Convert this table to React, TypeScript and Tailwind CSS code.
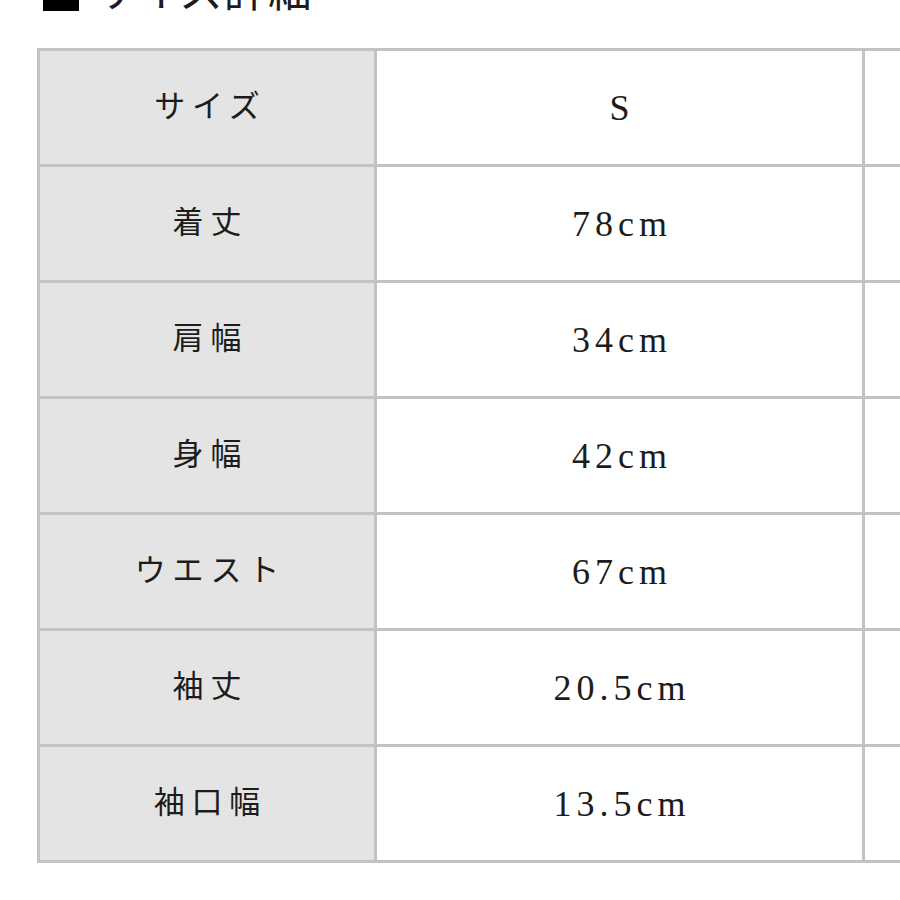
const rows: [string, string][] = [
	["サイズ", "S"],
	["着丈", "78cm"],
	["肩幅", "34cm"],
	["身幅", "42cm"],
	["ウエスト", "67cm"],
	["袖丈", "20.5cm"],
	["袖口幅", "13.5cm"],
];

const font = {
	fontFamily: '"Liberation Serif", "Noto Sans CJK JP", serif',
};

export default function App() {
	return (
		<div
			className="w-[900px] h-[900px] overflow-hidden bg-white text-[#1c1c1c]"
			style={font}
		>
			<div className="flex items-end gap-[14px] pl-[43px] -mt-[30px] h-[45px]">
				<span className="block w-[36px] h-[36px] bg-black mb-[4px]" />
				<span className="text-[44px] leading-none">サイズ詳細</span>
			</div>

			<div className="mt-[33px] ml-[37px] w-[1400px] grid grid-cols-[337px_488px_575px] border-t-[3px] border-l-[3px] border-[#c3c3c3]">
				{rows.map(([label, value]) => (
					<div key={label} className="contents">
						<div className="h-[116px] flex items-center justify-center bg-[#e4e4e4] border-r-[3px] border-b-[3px] border-[#c3c3c3] text-[31px] tracking-[0.22em] pl-[0.22em]">
							{label}
						</div>
						<div className="h-[116px] flex items-center justify-center border-r-[3px] border-b-[3px] border-[#c3c3c3] text-[36px] tracking-[0.14em] pl-[0.14em]">
							{value}
						</div>
						<div className="h-[116px] border-b-[3px] border-[#c3c3c3]" />
					</div>
				))}
			</div>
		</div>
	);
}
